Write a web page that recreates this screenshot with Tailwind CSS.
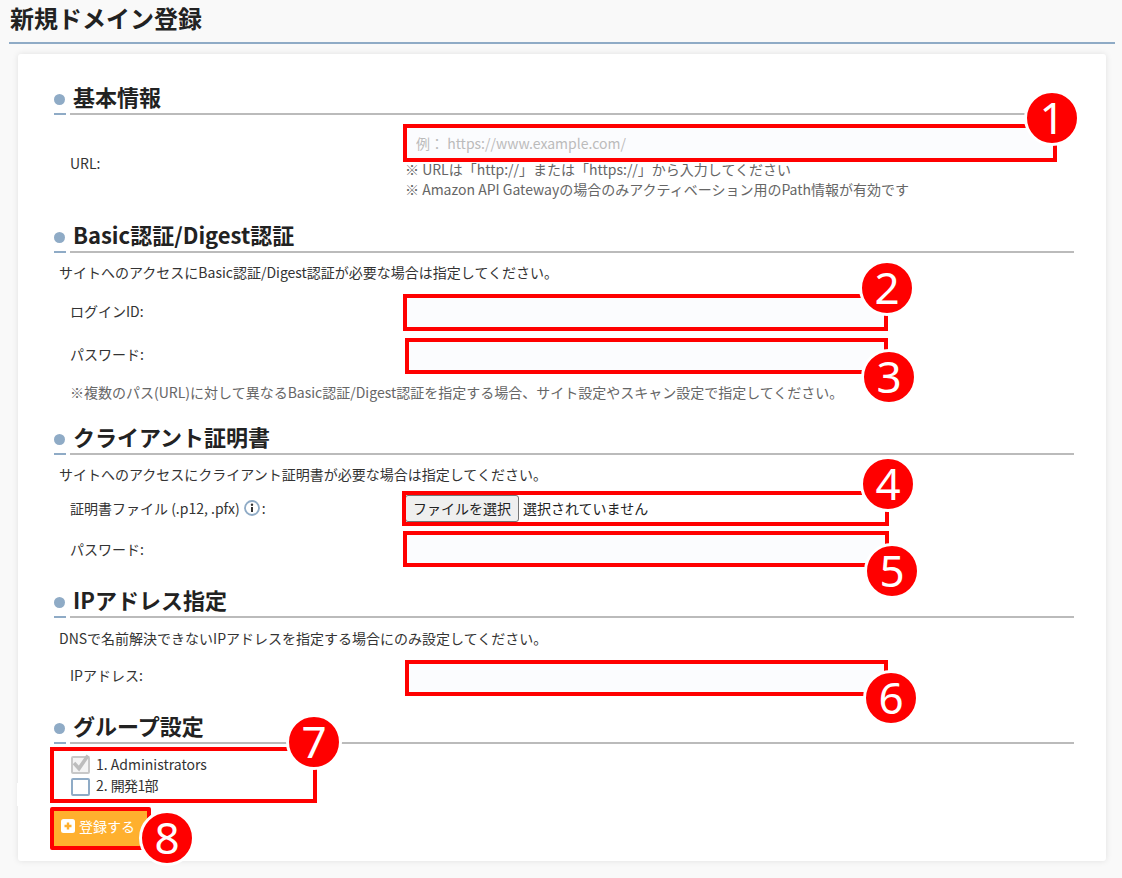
<!DOCTYPE html>
<html lang="ja">
<head>
  <meta charset="UTF-8">
  <title>新規ドメイン登録</title>
  <script src="https://cdn.jsdelivr.net/npm/@tailwindcss/browser@4"></script>
</head>
<body class="bg-[#f9f9f9] h-screen overflow-hidden text-[14px] leading-[20px] text-[#333] font-['Noto_Sans_CJK_JP','Noto_Sans',sans-serif]">

  <div class="ml-[9px] mr-[7px] h-[44px] border-b-2 border-[#8fabc6] pl-[1px]">
    <h1 class="text-[24px] leading-[36px] font-bold text-[#222]">新規ドメイン登録</h1>
  </div>

  <main class="relative ml-[18px] mr-[16px] mt-[10px] bg-white rounded-[3px] shadow-[0_0_6px_rgba(0,0,0,0.1)] pt-[29px] pb-[11px] pl-[36px] pr-[32px]">
    <span class="absolute -left-[1px] top-[729px] w-[2px] h-[23px] bg-white"></span>

    <!-- 基本情報 -->
    <section>
      <div class="relative h-[32px] flex items-center pl-[19px] pb-[7px]">
        <span class="absolute left-0 top-[11px] w-[11px] h-[11px] rounded-full bg-[#8fabc6]"></span>
        <h2 class="text-[22px] leading-[30px] font-bold text-[#222]">基本情報</h2>
        <span class="absolute left-0 bottom-0 w-[12px] h-[2px] bg-[#8fabc6]"></span>
        <span class="absolute left-[16px] right-0 bottom-0 h-[2px] bg-[#bbb]"></span>
      </div>
      <div class="flex items-center mt-[13px]">
        <label class="w-[353px] pl-[16px] pb-[2px] shrink-0">URL:</label>
        <div>
          <div class="relative w-[646px] h-[30px] bg-[#fbfcfe] outline-4 outline-[#f00]">
            <input type="text" placeholder="例： https://www.example.com/" class="w-full h-full px-[9px] outline-none placeholder:text-[#bbb]">
            <span class="absolute -right-[27px] -top-[38px] w-[56px] h-[56px] rounded-full bg-[#f00] border-[3px] border-white text-white text-[44px] leading-[48px] text-center font-['Noto_Sans']">1</span>
          </div>
          <p class="mt-[1px] -ml-[2px] text-[#666]">※ URLは「http://」または「https://」から入力してください</p>
          <p class="-ml-[2px] text-[#666]">※ Amazon API Gatewayの場合のみアクティベーション用のPath情報が有効です</p>
        </div>
      </div>
    </section>

    <!-- Basic認証 -->
    <section class="mt-[22px]">
      <div class="relative h-[32px] flex items-center pl-[19px] pb-[7px]">
        <span class="absolute left-0 top-[11px] w-[11px] h-[11px] rounded-full bg-[#8fabc6]"></span>
        <h2 class="text-[22px] leading-[30px] font-bold text-[#222]">Basic認証/Digest認証</h2>
        <span class="absolute left-0 bottom-0 w-[12px] h-[2px] bg-[#8fabc6]"></span>
        <span class="absolute left-[16px] right-0 bottom-0 h-[2px] bg-[#bbb]"></span>
      </div>
      <p class="mt-[9px] pl-[5px]">サイトへのアクセスにBasic認証/Digest認証が必要な場合は指定してください。</p>
      <div class="flex items-center mt-[16px]">
        <label class="w-[353px] pl-[16px] pb-[4px] shrink-0">ログインID:</label>
        <div class="relative w-[477px] h-[29px] bg-[#fbfcfe] outline-4 outline-[#f00]">
          <span class="absolute -right-[31px] -top-[38px] w-[56px] h-[56px] rounded-full bg-[#f00] border-[3px] border-white text-white text-[44px] leading-[48px] text-center font-['Noto_Sans']">2</span>
        </div>
      </div>
      <div class="flex items-center mt-[15px]">
        <label class="w-[355px] pl-[16px] pb-[4px] shrink-0">パスワード:</label>
        <div class="relative w-[475px] h-[28px] bg-[#fbfcfe] outline-4 outline-[#f00]">
          <span class="absolute -right-[33px] -bottom-[35px] w-[56px] h-[56px] rounded-full bg-[#f00] border-[3px] border-white text-white text-[44px] leading-[48px] text-center font-['Noto_Sans']">3</span>
        </div>
      </div>
      <p class="mt-[12px] pl-[16px] text-[#666]">※複数のパス(URL)に対して異なるBasic認証/Digest認証を指定する場合、サイト設定やスキャン設定で指定してください。</p>
    </section>

    <!-- クライアント証明書 -->
    <section class="mt-[21px]">
      <div class="relative h-[32px] flex items-center pl-[19px] pb-[7px]">
        <span class="absolute left-0 top-[11px] w-[11px] h-[11px] rounded-full bg-[#8fabc6]"></span>
        <h2 class="text-[22px] leading-[30px] font-bold text-[#222]">クライアント証明書</h2>
        <span class="absolute left-0 bottom-0 w-[12px] h-[2px] bg-[#8fabc6]"></span>
        <span class="absolute left-[16px] right-0 bottom-0 h-[2px] bg-[#bbb]"></span>
      </div>
      <p class="mt-[9px] pl-[5px]">サイトへのアクセスにクライアント証明書が必要な場合は指定してください。</p>
      <div class="flex items-center mt-[11px]">
        <label class="w-[352px] pl-[16px] pb-[2px] shrink-0 flex items-center">証明書ファイル (.p12, .pfx)
          <svg class="ml-[4px] mr-[2px]" width="16" height="16" viewBox="0 0 16 16"><circle cx="8" cy="8" r="7" fill="none" stroke="#8fabc6" stroke-width="1.8"/><circle cx="8" cy="4.8" r="1.2" fill="#333"/><rect x="7" y="7" width="2" height="5" fill="#333"/></svg>:
        </label>
        <div class="relative w-[479px] h-[27px] outline-4 outline-[#f00] flex items-center bg-white">
          <button class="w-[114px] h-[27px] -ml-[1px] pb-[2px] bg-[#efefef] border border-[#767676] rounded-[3px] text-[#222]">ファイルを選択</button>
          <span class="ml-[4px] pb-[2px] text-[#222]">選択されていません</span>
          <span class="absolute -right-[31px] -top-[39px] w-[56px] h-[56px] rounded-full bg-[#f00] border-[3px] border-white text-white text-[44px] leading-[48px] text-center font-['Noto_Sans']">4</span>
        </div>
      </div>
      <div class="flex items-center mt-[13px]">
        <label class="w-[353px] pl-[16px] shrink-0">パスワード:</label>
        <div class="relative w-[478px] h-[28px] bg-[#fbfcfe] outline-4 outline-[#f00]">
          <span class="absolute -right-[35px] -bottom-[36px] w-[56px] h-[56px] rounded-full bg-[#f00] border-[3px] border-white text-white text-[44px] leading-[48px] text-center font-['Noto_Sans']">5</span>
        </div>
      </div>
    </section>

    <!-- IPアドレス指定 -->
    <section class="mt-[23px]">
      <div class="relative h-[32px] flex items-center pl-[19px] pb-[7px]">
        <span class="absolute left-0 top-[11px] w-[11px] h-[11px] rounded-full bg-[#8fabc6]"></span>
        <h2 class="text-[22px] leading-[30px] font-bold text-[#222]">IPアドレス指定</h2>
        <span class="absolute left-0 bottom-0 w-[12px] h-[2px] bg-[#8fabc6]"></span>
        <span class="absolute left-[16px] right-0 bottom-0 h-[2px] bg-[#bbb]"></span>
      </div>
      <p class="mt-[10px] pl-[5px]">DNSで名前解決できないIPアドレスを指定する場合にのみ設定してください。</p>
      <div class="flex items-center mt-[16px]">
        <label class="w-[355px] pl-[16px] pb-[6px] shrink-0">IPアドレス:</label>
        <div class="relative w-[475px] h-[28px] bg-[#fbfcfe] outline-4 outline-[#f00]">
          <span class="absolute -right-[35px] -bottom-[34px] w-[56px] h-[56px] rounded-full bg-[#f00] border-[3px] border-white text-white text-[44px] leading-[48px] text-center font-['Noto_Sans']">6</span>
        </div>
      </div>
    </section>

    <!-- グループ設定 -->
    <section class="mt-[20px]">
      <div class="relative h-[32px] flex items-center pl-[19px] pb-[7px]">
        <span class="absolute left-0 top-[11px] w-[11px] h-[11px] rounded-full bg-[#8fabc6]"></span>
        <h2 class="text-[22px] leading-[30px] font-bold text-[#222]">グループ設定</h2>
        <span class="absolute left-0 bottom-0 w-[12px] h-[2px] bg-[#8fabc6]"></span>
        <span class="absolute left-[16px] right-0 bottom-0 h-[2px] bg-[#bbb]"></span>
      </div>
      <div class="relative mt-[7px] w-[259px] h-[48px] outline-4 outline-[#f00] pl-[17px] pt-[4px] flex flex-col gap-[3px]">
        <div class="flex items-center gap-[6px] h-[19px]">
          <span class="w-[19px] h-[18px] border-2 border-[#c8c8c8] rounded-[2px] bg-[#f4f4f4] flex items-center justify-center">
            <svg width="19" height="19" viewBox="0 0 19 19" class="-mt-[2px] overflow-visible"><path d="M3 9l5 5.5L17 1.5" fill="none" stroke="#bdbdbd" stroke-width="3.6"/></svg>
          </span>
          <span class="pb-[2px]">1. Administrators</span>
        </div>
        <div class="flex items-center gap-[6px] h-[19px]">
          <span class="w-[19px] h-[18px] border-2 border-[#8fabc6] rounded-[2px] bg-white"></span>
          <span class="pb-[3px]">2. <span class="tracking-[-0.7px]">開発1部</span></span>
        </div>
        <span class="absolute -right-[29px] -top-[37px] w-[56px] h-[56px] rounded-full bg-[#f00] border-[3px] border-white text-white text-[44px] leading-[48px] text-center font-['Noto_Sans']">7</span>
      </div>
      <div class="relative w-[101px] h-[43px] border-4 border-[#f00] rounded-[2px] -translate-x-[4px] mt-[8px] bg-[#ffb02e]">
        <button class="w-full h-full flex items-center pl-[7px] pb-[6px] gap-[4px] text-white text-[14px]">
          <svg width="14" height="14" viewBox="0 0 14 14"><rect width="14" height="14" rx="2.5" fill="#fff"/><path d="M7 3.5v7M3.5 7h7" stroke="#ffb02e" stroke-width="2.4"/></svg>
          登録する
        </button>
        <span class="absolute -right-[48px] -bottom-[20px] w-[56px] h-[56px] rounded-full bg-[#f00] border-[3px] border-white text-white text-[44px] leading-[48px] text-center font-['Noto_Sans']">8</span>
      </div>
    </section>
  </main>

</body>
</html>
